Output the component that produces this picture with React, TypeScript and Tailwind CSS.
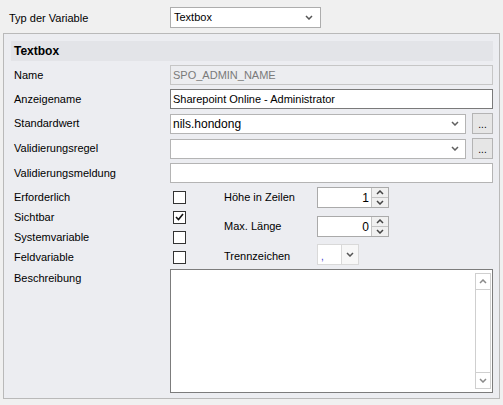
import type { ReactNode } from "react";

const font = { fontFamily: '"Liberation Sans", Arial, sans-serif' };

const Chevron = ({ dir = "down", className = "" }: { dir?: "down" | "up"; className?: string }) => (
  <svg width="8" height="5" viewBox="0 0 8 5" className={className}>
    <polyline
      points={dir === "down" ? "1,1 4,4 7,1" : "1,4 4,1 7,4"}
      fill="none"
      stroke="currentColor"
      strokeWidth="1.5"
    />
  </svg>
);

const Label = ({ children, className = "" }: { children: ReactNode; className?: string }) => (
  <div className={`w-[159px] shrink-0 pl-[3px] text-[11px] text-black ${className}`}>{children}</div>
);

const TextInput = ({ value, muted, dark }: { value?: string; muted?: boolean; dark?: boolean }) => (
  <div
    className={`flex h-[20px] flex-1 items-center border px-[2px] text-[11px] ${
      muted ? "border-[#c6c6c6] bg-[#ecedf0] text-[#7a7a7a]" : "bg-white text-black"
    } ${dark ? "border-[#7a7a7a]" : muted ? "" : "border-[#b4b4b4]"}`}
  >
    {value}
  </div>
);

const Combo = ({ value }: { value?: string }) => (
  <div className="flex h-[20px] flex-1 items-center border border-[#b4b4b4] bg-white pl-[2px] pr-[6px]">
    <span className="flex-1 text-[12px] text-black">{value}</span>
    <Chevron className="text-[#606060]" />
  </div>
);

const DotsButton = () => (
  <div className="ml-[6px] flex h-[21px] w-[21px] items-end justify-center border border-[#b4b4b4] bg-[#e6e6e6] pb-[3px] text-[10px] leading-none text-black">
    ...
  </div>
);

const Row = ({ label, children }: { label: string; children: ReactNode }) => (
  <div className="flex items-center">
    <Label>{label}</Label>
    <div className="flex flex-1 items-center">{children}</div>
  </div>
);

const CheckBox = ({ checked }: { checked?: boolean }) => (
  <div className="ml-[3px] flex h-[13px] w-[13px] items-center justify-center border border-[#333] bg-white">
    {checked && (
      <svg width="9" height="8" viewBox="0 0 9 8">
        <polyline points="1,4 3.5,6.5 8,1" fill="none" stroke="#111" strokeWidth="1.6" />
      </svg>
    )}
  </div>
);

const Spin = ({ value }: { value: string }) => (
  <div className="flex h-[21px] w-[72px] border border-[#aaa] bg-white">
    <div className="flex flex-1 items-center justify-end pr-[2px] text-[12px] text-black">{value}</div>
    <div className="flex w-[17px] flex-col border-l border-[#c4c4c4] bg-[#f0f0f0] text-[#444]">
      <div className="flex flex-1 items-center justify-center border-b border-[#c4c4c4]">
        <Chevron dir="up" />
      </div>
      <div className="flex flex-1 items-center justify-center">
        <Chevron />
      </div>
    </div>
  </div>
);

export default function App() {
  return (
    <div style={font} className="h-[405px] w-[503px] overflow-hidden bg-[#f0f0f0]">
      <div className="flex h-[33px] items-start pt-[7px]">
        <div className="w-[170px] pl-[9px] pt-[3px] text-[11px] text-black">Typ der Variable</div>
        <div className="flex h-[21px] w-[151px] items-center border border-[#adadad] bg-white pl-[3px] pr-[7px]">
          <span className="flex-1 text-[11px] text-black">Textbox</span>
          <Chevron className="text-[#555]" />
        </div>
      </div>

      <div className="ml-[3px] flex h-[366px] w-[497px] flex-col border border-[#b9b9b9] bg-[#ecedf1] pl-[7px] pr-[6px] pt-[7px]">
        <div className="flex h-[20px] items-center bg-[#e3e4e8] pl-[3px] text-[12px] font-bold text-black">Textbox</div>

        <div className="mt-[4px] flex flex-col gap-[4px]">
          <Row label="Name">
            <TextInput value="SPO_ADMIN_NAME" muted />
          </Row>
          <Row label="Anzeigename">
            <TextInput value="Sharepoint Online - Administrator" dark />
          </Row>
          <Row label="Standardwert">
            <Combo value="nils.hondong" />
            <DotsButton />
          </Row>
          <Row label="Validierungsregel">
            <Combo />
            <DotsButton />
          </Row>
          <Row label="Validierungsmeldung">
            <TextInput />
          </Row>
        </div>

        <div className="mt-[4px] flex h-[82px]">
          <div className="flex flex-col">
            {[
              { label: "Erforderlich", checked: false },
              { label: "Sichtbar", checked: true },
              { label: "Systemvariable", checked: false },
              { label: "Feldvariable", checked: false },
            ].map((item) => (
              <div key={item.label} className="flex h-[20px] items-center">
                <Label className="text-[#1a0505]">{item.label}</Label>
                <CheckBox checked={item.checked} />
              </div>
            ))}
          </div>
          <div className="ml-[38px] flex flex-col">
            <div className="flex h-[21px] items-center">
              <div className="w-[93px] text-[11px] text-black">Höhe in Zeilen</div>
              <Spin value="1" />
            </div>
            <div className="mt-[8px] flex h-[21px] items-center">
              <div className="w-[93px] text-[11px] text-black">Max. Länge</div>
              <Spin value="0" />
            </div>
            <div className="mt-[7px] flex h-[21px] items-center">
              <div className="w-[93px] pt-[4px] text-[11px] text-black">Trennzeichen</div>
              <div className="flex h-[21px] w-[42px] border border-[#d9d9d9] bg-[#f7f7f7]">
                <div className="flex w-[23px] items-end bg-white pb-[2px] pl-[3px] text-[10px] leading-none text-[#3b3bd0]">,</div>
                <div className="flex flex-1 items-center justify-center border-l border-[#d9d9d9] text-[#555]">
                  <Chevron />
                </div>
              </div>
            </div>
          </div>
        </div>

        <div className="flex">
          <Label className="mt-[1px]">Beschreibung</Label>
          <div className="flex h-[124px] flex-1 justify-end border border-[#7c7c7c] bg-white p-[3px] pr-[1px]">
            <div className="flex w-[16px] flex-col border border-[#cfcfcf] bg-white text-[#8a8a8a]">
              <div className="flex h-[16px] items-center justify-center border-b border-[#cfcfcf]">
                <Chevron dir="up" />
              </div>
              <div className="flex-1" />
              <div className="flex h-[16px] items-center justify-center border-t border-[#cfcfcf]">
                <Chevron />
              </div>
            </div>
          </div>
        </div>
      </div>
    </div>
  );
}
